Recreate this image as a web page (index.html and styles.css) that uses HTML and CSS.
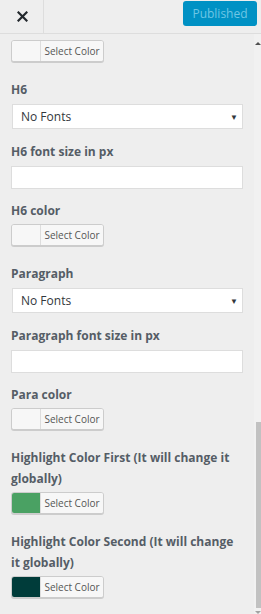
FILE: index.html
```html
<!DOCTYPE html>
<html lang="en">

<head>
  <meta charset="UTF-8">
  <title>Customize</title>
  <meta name="viewport" content="width=device-width, initial-scale=1.0">
  <link rel="stylesheet" href="styles.css">
</head>

<body>
  <!-- Top bar -->
  <div class="header">
    <button class="close-btn" aria-label="Close">
      <svg width="11" height="11" viewBox="0 0 11 11">
        <path d="M1.5 1.5 L9.5 9.5 M9.5 1.5 L1.5 9.5" stroke="#23282d" stroke-width="2.2" stroke-linecap="square" />
      </svg>
    </button>
    <div class="header-actions">
      <button class="publish-btn" disabled>Published</button>
    </div>
  </div>

  <div class="main">
    <div class="panel">
      <div class="control color-control">
        <button class="color-btn"><span class="swatch"></span><span class="color-text">Select Color</span></button>
      </div>

      <div class="control">
        <span class="control-title">H6</span>
        <div class="select">No Fonts<span class="arrow">▼</span></div>
      </div>

      <div class="control input-control">
        <span class="control-title">H6 font size in px</span>
        <input class="text-input" type="text">
      </div>

      <div class="control color-control">
        <span class="control-title">H6 color</span>
        <button class="color-btn"><span class="swatch"></span><span class="color-text">Select Color</span></button>
      </div>

      <div class="control">
        <span class="control-title">Paragraph</span>
        <div class="select">No Fonts<span class="arrow">▼</span></div>
      </div>

      <div class="control input-control">
        <span class="control-title">Paragraph font size in px</span>
        <input class="text-input" type="text">
      </div>

      <div class="control color-control">
        <span class="control-title">Para color</span>
        <button class="color-btn"><span class="swatch"></span><span class="color-text">Select Color</span></button>
      </div>

      <div class="control color-control">
        <span class="control-title">Highlight Color First (It will change it globally)</span>
        <button class="color-btn"><span class="swatch swatch-green"></span><span class="color-text">Select Color</span></button>
      </div>

      <div class="control color-control">
        <span class="control-title">Highlight Color Second (It will change it globally)</span>
        <button class="color-btn"><span class="swatch swatch-dark"></span><span class="color-text">Select Color</span></button>
      </div>
    </div>

    <!-- Scrollbar -->
    <div class="scrollbar">
      <span class="scroll-arrow up"></span>
      <span class="scroll-thumb"></span>
      <span class="scroll-arrow down"></span>
    </div>
  </div>
</body>

</html>
```

FILE: styles.css
```css
/* General Styles */
body {
  font-family: 'Open Sans', 'Noto Sans', sans-serif;
  background-color: #eeeeee;
  margin: 0;
  width: 261px;
  height: 614px;
  overflow: hidden;
  color: #555d66;
}

/* Header */
.header {
  display: flex;
  height: 33px;
  border-bottom: 1px solid #dddddd;
  background-color: #eeeeee;
}

.close-btn {
  width: 44px;
  height: 33px;
  padding: 0 0 0 1px;
  border: none;
  border-right: 1px solid #dddddd;
  background: none;
  display: flex;
  justify-content: center;
  align-items: center;
}

.header-actions {
  flex: 1;
  display: flex;
  justify-content: flex-end;
  align-items: flex-start;
  padding: 1px 4px 0 0;
}

.publish-btn {
  width: 74px;
  height: 25px;
  padding: 0;
  font-family: inherit;
  font-size: 12px;
  background-color: #0091c4;
  color: #6fc6e4;
  border: none;
  border-radius: 3px;
}

/* Content */
.main {
  display: flex;
  height: 580px;
}

.panel {
  flex: 1;
  padding: 6px 10px 0 11px;
  overflow: hidden;
}

.control {
  display: flex;
  flex-direction: column;
  align-items: flex-start;
  margin-bottom: 12px;
}

.input-control {
  margin-bottom: 11px;
}

.color-control {
  margin-bottom: 17px;
}

.control-title {
  display: block;
  font-size: 12px;
  font-weight: 700;
  line-height: 21px;
  margin-bottom: 4px;
  color: #555d66;
}

.color-control .control-title {
  margin-bottom: 3px;
}

.select {
  position: relative;
  box-sizing: border-box;
  width: 231px;
  height: 25px;
  margin-left: 1px;
  padding: 0 0 0 8px;
  background-color: #ffffff;
  border: 1px solid #dddddd;
  font-size: 12px;
  line-height: 23px;
  color: #32373c;
}

.select .arrow {
  position: absolute;
  right: 4px;
  top: 0;
  font-size: 8px;
  color: #32373c;
}

.text-input {
  box-sizing: border-box;
  width: 232px;
  height: 23px;
  margin: 0;
  padding: 0 6px;
  background-color: #ffffff;
  border: 1px solid #dddddd;
}

.color-btn {
  display: flex;
  height: 22px;
  width: 93px;
  padding: 0;
  border: 1px solid #cccccc;
  border-radius: 3px;
  background-color: #f7f7f7;
  box-shadow: 0 1px 0 #cccccc;
  overflow: hidden;
}

.swatch {
  width: 28px;
  height: 100%;
  border-right: 1px solid #dddddd;
  background-color: #f7f7f7;
}

.swatch-green {
  background-color: #4aa163;
}

.swatch-dark {
  background-color: #003c3a;
}

.color-text {
  flex: 1;
  font-family: 'Open Sans', 'Noto Sans', sans-serif;
  font-size: 10px;
  line-height: 20px;
  color: #555555;
  background-color: #f7f7f7;
}

/* Scrollbar */
.scrollbar {
  width: 7px;
  display: flex;
  flex-direction: column;
  align-items: flex-end;
  background-color: #f1f1f1;
}

.scroll-arrow {
  width: 0;
  height: 0;
  border-left: 3px solid transparent;
  border-right: 3px solid transparent;
}

.scroll-arrow.up {
  margin-top: 8px;
  border-bottom: 3px solid #505050;
}

.scroll-arrow.down {
  margin-top: 3px;
  border-top: 3px solid #a3a3a3;
}

.scroll-thumb {
  width: 5px;
  height: 186px;
  margin-top: auto;
  background-color: #c1c1c1;
}
```
